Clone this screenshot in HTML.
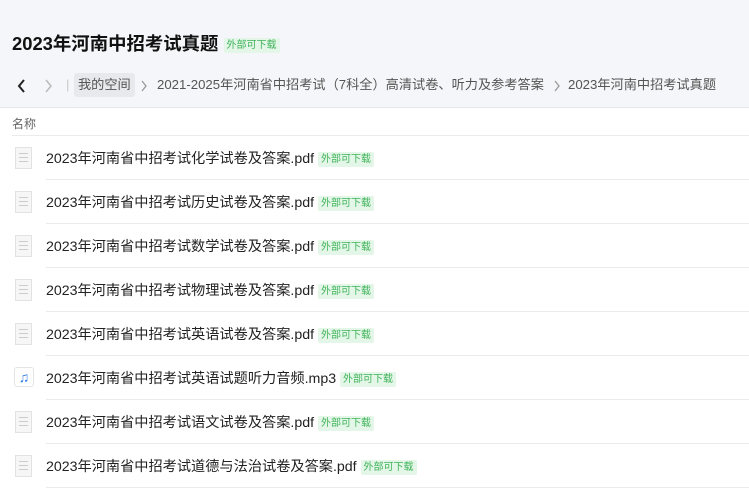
<!DOCTYPE html><html><head><meta charset="utf-8"><style>
body{margin:0;width:749px;height:503px;overflow:hidden;background:#fff;font-family:"Liberation Sans","Noto Sans CJK SC",sans-serif;color:#222}
.hd{position:absolute;left:0;top:0;width:749px;height:107px;background:#f5f6f9;border-bottom:1px solid #e6e7ea}
.t{position:absolute;left:12px;top:30px;font-size:18.4px;font-weight:bold;color:#111;white-space:nowrap}
.b{display:inline-block;font-size:10px;font-weight:normal;color:#3fb35a;background:#e3f6e7;padding:0 3px;height:15px;line-height:15px;vertical-align:middle;border-radius:2px}
.bc{position:absolute;left:0;top:73px;height:24px;font-size:13.2px;color:#555;white-space:nowrap;line-height:24px}
.bc span,.bc svg{position:absolute}
.row{position:absolute;left:0;width:749px;height:44px}
.row .n{position:absolute;left:46px;top:12px;font-size:14.2px;color:#222;white-space:nowrap}
.row .l{position:absolute;left:46px;right:0;bottom:0;height:1px;background:#eaebee}
.ic{position:absolute;left:15px;top:11px;width:17px;height:22px;background:#f6f6f6;border:1px solid #e2e2e2;box-sizing:border-box}
.ic i{position:absolute;left:3px;right:3px;height:1px;background:#ccc}
</style></head><body>
<div class="hd"></div>
<div class="t">2023年河南中招考试真题 <span class="b">外部可下载</span></div>
<div class="bc">
<svg style="left:17px;top:6px" width="10" height="14" viewBox="0 0 10 14"><path d="M7 1L2 7l5 6" fill="none" stroke="#222" stroke-width="2"/></svg>
<svg style="left:43px;top:6px" width="10" height="14" viewBox="0 0 10 14"><path d="M3 1l5 6-5 6" fill="none" stroke="#bbb" stroke-width="1.5"/></svg>
<span style="left:66px;color:#ccc">|</span>
<span style="left:74px;background:#e8e9ec;padding:0 4px;border-radius:3px">我的空间</span>
<svg style="left:140px;top:7px" width="8" height="12" viewBox="0 0 8 12"><path d="M2 1l4 5-4 5" fill="none" stroke="#999" stroke-width="1.3"/></svg>
<span style="left:157px">2021-2025年河南省中招考试（7科全）高清试卷、听力及参考答案</span>
<svg style="left:553px;top:7px" width="8" height="12" viewBox="0 0 8 12"><path d="M2 1l4 5-4 5" fill="none" stroke="#999" stroke-width="1.3"/></svg>
<span style="left:568px">2023年河南中招考试真题</span>
</div>
<div style="position:absolute;left:12px;top:115px;font-size:12px;color:#666">名称</div>
<div style="position:absolute;left:12px;right:0;top:135px;height:1px;background:#eaebee"></div>

<div class="row" style="top:136px"><div class="ic"><i style="top:5px"></i><i style="top:9px"></i><i style="top:13px"></i></div><div class="n">2023年河南省中招考试化学试卷及答案.pdf <span class="b">外部可下载</span></div><div class="l"></div></div>
<div class="row" style="top:180px"><div class="ic"><i style="top:5px"></i><i style="top:9px"></i><i style="top:13px"></i></div><div class="n">2023年河南省中招考试历史试卷及答案.pdf <span class="b">外部可下载</span></div><div class="l"></div></div>
<div class="row" style="top:224px"><div class="ic"><i style="top:5px"></i><i style="top:9px"></i><i style="top:13px"></i></div><div class="n">2023年河南省中招考试数学试卷及答案.pdf <span class="b">外部可下载</span></div><div class="l"></div></div>
<div class="row" style="top:268px"><div class="ic"><i style="top:5px"></i><i style="top:9px"></i><i style="top:13px"></i></div><div class="n">2023年河南省中招考试物理试卷及答案.pdf <span class="b">外部可下载</span></div><div class="l"></div></div>
<div class="row" style="top:312px"><div class="ic"><i style="top:5px"></i><i style="top:9px"></i><i style="top:13px"></i></div><div class="n">2023年河南省中招考试英语试卷及答案.pdf <span class="b">外部可下载</span></div><div class="l"></div></div>
<div class="row" style="top:356px"><div style="position:absolute;left:14px;top:11px;width:20px;height:20px;border:1px solid #e2e4e8;border-radius:3px;box-sizing:border-box;background:#fff;color:#2f7be6;font-size:14px;text-align:center;line-height:18px">&#x266B;</div><div class="n">2023年河南省中招考试英语试题听力音频.mp3 <span class="b">外部可下载</span></div><div class="l"></div></div>
<div class="row" style="top:400px"><div class="ic"><i style="top:5px"></i><i style="top:9px"></i><i style="top:13px"></i></div><div class="n">2023年河南省中招考试语文试卷及答案.pdf <span class="b">外部可下载</span></div><div class="l"></div></div>
<div class="row" style="top:444px"><div class="ic"><i style="top:5px"></i><i style="top:9px"></i><i style="top:13px"></i></div><div class="n">2023年河南省中招考试道德与法治试卷及答案.pdf <span class="b">外部可下载</span></div><div class="l"></div></div>
</body></html>
